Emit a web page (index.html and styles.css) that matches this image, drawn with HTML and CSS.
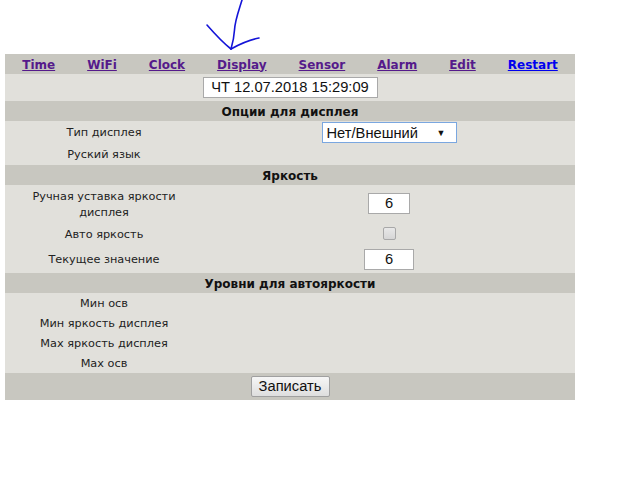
FILE: index.html
```html
<!DOCTYPE html>
<html lang="ru">
<head>
<meta charset="utf-8">
<title>Display</title>
<link rel="stylesheet" href="styles.css">
</head>
<body>
<svg class="arrow" width="70" height="54" viewBox="200 0 70 54" aria-hidden="true">
  <path d="M242 0 C239 10 235 20 234.5 30 C234 38 232.5 44 231 49" />
  <path d="M207 25 C214 33 222 42 231 49" />
  <path d="M231 49 C240 44 249 40 259 38" />
</svg>
<div class="page">
  <nav class="nav">
    <a href="#" class="visited">Time</a>
    <a href="#" class="visited">WiFi</a>
    <a href="#" class="visited">Clock</a>
    <a href="#" class="visited">Display</a>
    <a href="#" class="visited">Sensor</a>
    <a href="#" class="visited">Alarm</a>
    <a href="#" class="visited">Edit</a>
    <a href="#" class="fresh">Restart</a>
  </nav>
  <div class="daterow">
    <div class="datebox">ЧТ 12.07.2018 15:29:09</div>
  </div>
  <div class="head">Опции для дисплея</div>
  <div class="row h22">
    <div class="label">Тип дисплея</div>
    <div class="field">
      <div class="select"><span>Нет/Внешний</span><span class="caret">▼</span></div>
    </div>
  </div>
  <div class="row h22">
    <div class="label">Руский язык</div>
    <div class="field"></div>
  </div>
  <div class="head">Яркость</div>
  <div class="row h37">
    <div class="label">Ручная уставка яркости<br>дисплея</div>
    <div class="field"><div class="num n42">6</div></div>
  </div>
  <div class="row h23">
    <div class="label">Авто яркость</div>
    <div class="field"><div class="check"></div></div>
  </div>
  <div class="row h28">
    <div class="label">Текущее значение</div>
    <div class="field"><div class="num n50">6</div></div>
  </div>
  <div class="head">Уровни для автояркости</div>
  <div class="row h20">
    <div class="label">Мин осв</div>
    <div class="field"></div>
  </div>
  <div class="row h20">
    <div class="label">Мин яркость дисплея</div>
    <div class="field"></div>
  </div>
  <div class="row h20">
    <div class="label">Max яркость дисплея</div>
    <div class="field"></div>
  </div>
  <div class="row h20">
    <div class="label">Max осв</div>
    <div class="field"></div>
  </div>
  <div class="btnrow">
    <div class="button">Записать</div>
  </div>
</div>
</body>
</html>
```
FILE: styles.css
```css
html, body {
  margin: 0;
  padding: 0;
  background: #ffffff;
}
body {
  font-family: "DejaVu Sans", Verdana, sans-serif;
  font-size: 11.3px;
  color: #222;
}
.arrow {
  position: absolute;
  left: 200px;
  top: 0;
  fill: none;
  stroke: #1414d8;
  stroke-width: 1.6;
  stroke-linecap: round;
}
.page {
  width: 570px;
  margin: 54px 0 0 5px;
  background: #e1e0db;
}
.nav {
  height: 20px;
  background: #c8c7c0;
  display: flex;
  justify-content: center;
  align-items: center;
  gap: 32px;
  font-weight: bold;
  font-size: 12px;
  padding-top: 1px;
  box-sizing: border-box;
}
.nav a { text-decoration: underline; }
.nav a.visited { color: #551a8b; }
.nav a.fresh { color: #0000ee; }
.daterow {
  height: 27px;
  display: flex;
  justify-content: center;
  align-items: center;
}
.datebox {
  width: 173px;
  height: 19px;
  border: 1px solid #a9a9a9;
  background: #fff;
  font-family: "Liberation Sans", Arial, sans-serif;
  font-size: 14.7px;
  line-height: 19px;
  text-align: center;
  color: #111;
}
.head {
  height: 20px;
  background: #c8c7c0;
  font-weight: bold;
  font-size: 12px;
  color: #111;
  display: flex;
  justify-content: center;
  align-items: center;
  padding-top: 1px;
  box-sizing: border-box;
}
.row {
  display: grid;
  grid-template-columns: 198px 1fr;
  align-items: center;
}
.h20 { height: 20px; }
.h22 { height: 22px; }
.h23 { height: 23px; }
.h28 { height: 28px; }
.h37 { height: 37px; }
.label {
  text-align: center;
  line-height: 16px;
  padding-top: 2px;
}
.field {
  display: flex;
  justify-content: center;
  align-items: center;
}
.select {
  height: 19px;
  border: 1px solid #7aa7e0;
  background: #fff;
  display: flex;
  justify-content: space-between;
  align-items: center;
  padding: 1px 0 0 4px;
  box-sizing: content-box;
  width: 129px;
  height: 18px;
  font-family: "Liberation Sans", Arial, sans-serif;
  font-size: 14.7px;
  color: #111;
}
.caret {
  font-size: 9px;
  margin-right: 10px;
}
.num {
  height: 19px;
  border: 1px solid #a9a9a9;
  background: #fff;
  font-family: "Liberation Sans", Arial, sans-serif;
  font-size: 14.7px;
  line-height: 19px;
  text-align: center;
  color: #111;
}
.n42 { width: 40px; }
.n50 { width: 48px; }
.check {
  width: 11px;
  height: 11px;
  border: 1px solid #a8a8a8;
  border-radius: 2px;
  background: linear-gradient(#e8e8e8, #d6d6d6);
}
.btnrow {
  height: 27px;
  background: #c8c7c0;
  display: flex;
  justify-content: center;
  align-items: center;
}
.button {
  width: 77px;
  height: 19px;
  border: 1px solid #a0a0a0;
  border-radius: 2px;
  background: linear-gradient(#f6f6f6, #dedede);
  font-family: "Liberation Sans", Arial, sans-serif;
  font-size: 14.7px;
  line-height: 19px;
  text-align: center;
  color: #111;
}
```
